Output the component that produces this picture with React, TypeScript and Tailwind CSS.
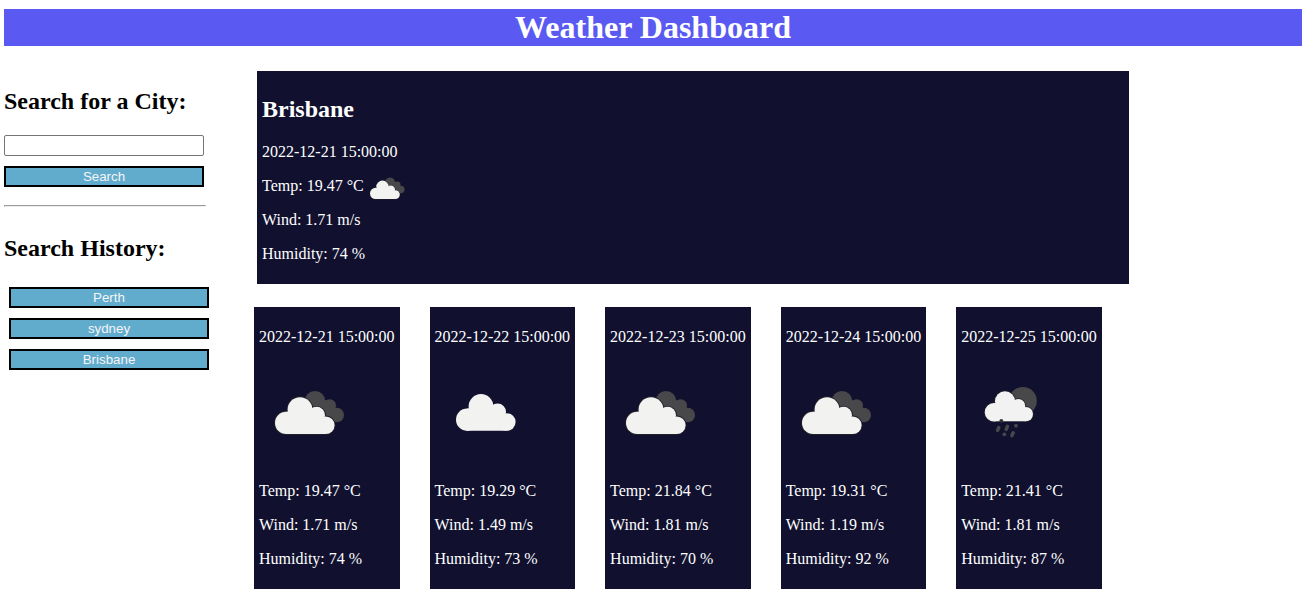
import React from "react";

type IconKind = "broken" | "cloud" | "rain";

interface Forecast {
  date: string;
  icon: IconKind;
  temp: string;
  wind: string;
  humidity: string;
}

const forecasts: Forecast[] = [
  { date: "2022-12-21 15:00:00", icon: "broken", temp: "19.47", wind: "1.71", humidity: "74" },
  { date: "2022-12-22 15:00:00", icon: "cloud", temp: "19.29", wind: "1.49", humidity: "73" },
  { date: "2022-12-23 15:00:00", icon: "broken", temp: "21.84", wind: "1.81", humidity: "70" },
  { date: "2022-12-24 15:00:00", icon: "broken", temp: "19.31", wind: "1.19", humidity: "92" },
  { date: "2022-12-25 15:00:00", icon: "rain", temp: "21.41", wind: "1.81", humidity: "87" },
];

const searchHistory = ["Perth", "sydney", "Brisbane"];

function CloudShape() {
  return (
    <>
      <circle cx="27.2" cy="60.9" r="11.2" />
      <circle cx="41" cy="47.6" r="12.4" />
      <circle cx="57.6" cy="53.2" r="8.4" />
      <circle cx="66.8" cy="63.2" r="8.8" />
      <path d="M27.2 72V49.8H55L66.8 60V72Z" />
    </>
  );
}

function WeatherIcon({ kind, className }: { kind: IconKind; className: string }) {
  return (
    <svg viewBox="0 0 100 100" className={className} aria-hidden="true">
      {kind === "broken" && (
        <>
          <g fill="#48484a">
            <circle cx="56" cy="39.4" r="10.4" />
            <circle cx="70.6" cy="43.6" r="6.4" />
            <circle cx="77.7" cy="53" r="7.3" />
            <path d="M56 38H66.3L71 40L77 46V60L66 58L52 46Z" />
          </g>
          <g fill="#20202a" stroke="#20202a" strokeWidth="1.8">
            <CloudShape />
          </g>
          <g fill="#f2f2f0">
            <CloudShape />
          </g>
        </>
      )}
      {kind === "cloud" && (
        <g fill="#f2f2f0" transform="translate(5 -3.2)">
          <CloudShape />
        </g>
      )}
      {kind === "rain" && (
        <>
          <circle cx="61.8" cy="39" r="14" fill="#48484a" />
          <g transform="translate(10.8 0.3) scale(0.81 0.82)">
            <g fill="#20202a" stroke="#20202a" strokeWidth="1.8">
              <CloudShape />
            </g>
            <g fill="#f2f2f2">
              <CloudShape />
            </g>
          </g>
          <g stroke="#48484a" strokeWidth="3.5" strokeLinecap="round">
            <path d="M37.8 65.5L36.6 68.4M46.5 64.3L45.2 67.4M52.2 70.8L50.9 73.6" />
          </g>
          <circle cx="40.3" cy="58.8" r="1.9" fill="#333335" />
          <circle cx="55" cy="63.7" r="1.9" fill="#48484a" />
          <circle cx="43.3" cy="72.3" r="1.9" fill="#48484a" />
        </>
      )}
    </svg>
  );
}

function CityButton({ label }: { label: string }) {
  return (
    <button className="block h-[21px] w-[200px] border-2 border-black bg-[#61abcd] text-center font-['Liberation_Sans',Arial,sans-serif] text-[13.333px] leading-[15px] text-[#f5f5f5]">
      {label}
    </button>
  );
}

export default function App() {
  return (
    <div className="pt-[9px] pr-[3px] pl-1 font-['Liberation_Serif','Times_New_Roman',serif] text-base leading-[18px] text-black">
      <h1 className="h-[37px] bg-[#5a5af3] text-center text-[32px] leading-[37px] font-bold text-white">
        Weather Dashboard
      </h1>

      <div className="flex items-start">
        <aside className="w-[250px] shrink-0 pt-[42px]">
          <h2 className="text-2xl leading-[27px] font-bold">Search for a City:</h2>
          <input
            type="text"
            aria-label="City"
            className="mt-5 block h-[21px] w-[200px] rounded-[2px] border border-[#767676] bg-white px-1 text-[13.333px] outline-none"
          />
          <div className="mt-2.5">
            <CityButton label="Search" />
          </div>
          <hr className="mt-[18px] h-[2px] w-[202px] border border-t-[#9a9a9a] border-r-[#eeeeee] border-b-[#eeeeee] border-l-[#9a9a9a]" />
          <h2 className="mt-7 text-2xl leading-[27px] font-bold">Search History:</h2>
          <div className="mt-[25px] ml-[5px] flex flex-col gap-2.5">
            {searchHistory.map((city) => (
              <CityButton key={city} label={city} />
            ))}
          </div>
        </aside>

        <main className="pt-[25px]">
          <section className="ml-[3px] flex h-[213px] w-[872px] flex-col bg-[#11112f] px-[5px] pt-[25px] text-white">
            <h2 className="text-2xl leading-[27px] font-bold">Brisbane</h2>
            <div className="mt-5 flex flex-col gap-4">
              <p>2022-12-21 15:00:00</p>
              <div className="flex h-[18px] items-center">
                <p>Temp: 19.47 °C</p>
                <WeatherIcon kind="broken" className="-ml-[2px] mt-1 h-[50px] w-[50px] shrink-0" />
              </div>
              <p>Wind: 1.71 m/s</p>
              <p>Humidity: 74 %</p>
            </div>
          </section>

          <section className="mt-[23px] flex gap-[30px]">
            {forecasts.map((day) => (
              <article
                key={day.date}
                className="h-[282px] shrink-0 bg-[#11112f] px-[5px] pt-[21px] whitespace-nowrap text-white"
              >
                <p>{day.date}</p>
                <WeatherIcon kind={day.icon} className="mt-4 block h-[100px] w-[100px]" />
                <div className="mt-5 flex flex-col gap-4">
                  <p>Temp: {day.temp} °C</p>
                  <p>Wind: {day.wind} m/s</p>
                  <p>Humidity: {day.humidity} %</p>
                </div>
              </article>
            ))}
          </section>
        </main>
      </div>
    </div>
  );
}
